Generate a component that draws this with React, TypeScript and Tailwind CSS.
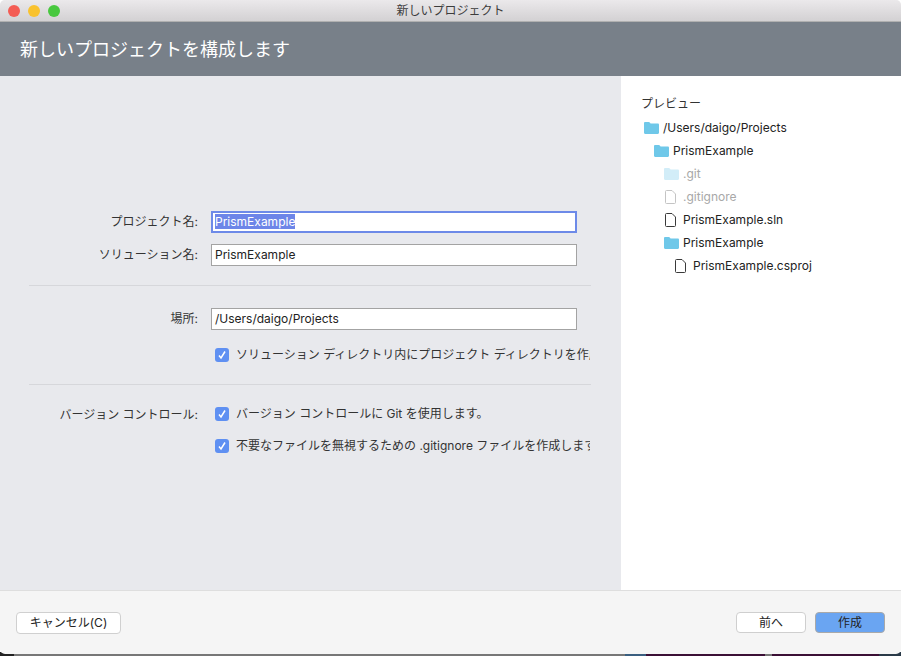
import type { ReactNode } from 'react';

const font = { fontFamily: '"Inter", "Noto Sans CJK JP", sans-serif' };

function FolderIcon({ faded }: { faded?: boolean }) {
  return (
    <svg width="15" height="12" viewBox="0 0 15 12" className="shrink-0">
      <path
        d="M0 1.200C0 .5.5 0 1.200 0h3.600c.5 0 .8.2 1 .5L6.600 1.600h7.200c.7 0 1.200.5 1.200 1.200v8c0 .7-.5 1.200-1.200 1.200H1.200C.5 12 0 11.500 0 10.800z"
        fill={faded ? '#d2edf8' : '#6fc8e9'}
      />
    </svg>
  );
}

function FileIcon({ faded }: { faded?: boolean }) {
  return (
    <svg width="11" height="14" viewBox="0 0 11 14" className="shrink-0">
      <path
        d="M1.500.5h5.500L10.500 4v8.500a1 1 0 0 1-1 1h-8a1 1 0 0 1-1-1v-11a1 1 0 0 1 1-1z"
        fill="#fff"
        stroke={faded ? '#c4c4c4' : '#3a3a3a'}
      />
    </svg>
  );
}

function Check() {
  return (
    <span className="flex h-[14px] w-[14px] shrink-0 items-center justify-center rounded-[3px] bg-[#5f90f2]">
      <svg width="10" height="10" viewBox="0 0 10 10">
        <path d="M2 5.500 4 8l4-6.500" fill="none" stroke="#fff" strokeWidth="1.500" />
      </svg>
    </span>
  );
}

function FormRow({ label, children }: { label?: string; children: ReactNode }) {
  return (
    <div className="flex items-center">
      <div className="w-[169px] shrink-0 pt-[1px] text-right text-[12px] text-[#333]">{label}</div>
      <div className="ml-[13px] min-w-0 flex-1">{children}</div>
    </div>
  );
}

function TextBox({ value, focused }: { value: string; focused?: boolean }) {
  return (
    <div
      className={`flex h-[22px] w-[366px] items-center bg-white text-[12px] text-[#222] ${
        focused ? 'border-2 border-[#6d8ae8] px-[2px]' : 'border border-[#a3a3a3] px-[3px] pt-[1px]'
      }`}
    >
      {focused ? <span className="bg-[#6d85e8] leading-[15px] text-white">{value}</span> : value}
    </div>
  );
}

function CheckRow({ label }: { label: string }) {
  return (
    <div className="flex w-[379px] items-center gap-[7px] overflow-hidden pl-[4px]">
      <Check />
      <span className="whitespace-nowrap text-[12px] text-[#333]">{label}</span>
    </div>
  );
}

function TreeRow({
  indent,
  name,
  file,
  faded,
}: {
  indent: string;
  name: string;
  file?: boolean;
  faded?: boolean;
}) {
  return (
    <div className={`flex h-[23px] items-center ${indent} ${file ? 'gap-[7px]' : 'gap-[4px]'}`}>
      {file ? <FileIcon faded={faded} /> : <FolderIcon faded={faded} />}
      <span className={`text-[12px] ${faded ? 'text-[#a8a8a8]' : 'text-[#222]'}`}>{name}</span>
    </div>
  );
}

export default function App() {
  return (
    <div className="relative h-[656px] w-[901px] overflow-hidden" style={font}>
      {/* desktop showing under the window */}
      <div className="absolute inset-x-0 bottom-0 flex h-[4px]">
        <div className="w-[14px] bg-[#222]" />
        <div className="w-[611px] bg-[#777]" />
        <div className="w-[21px] bg-[#3a5f80]" />
        <div className="w-[119px] bg-[#3b0f35]" />
        <div className="w-[7px] bg-[#777]" />
        <div className="w-[107px] bg-[#3b0f35]" />
        <div className="flex-1 bg-[#2a3a48]" />
      </div>
      <div className="relative flex h-[654px] flex-col overflow-hidden rounded-[5px] bg-[#f5f5f5]">
        <div className="relative flex h-[22px] shrink-0 items-center justify-center border-b border-[#b0b0b0] bg-gradient-to-b from-[#ebe9eb] to-[#d3d1d3]">
          <div className="absolute left-[8px] top-[5px] flex gap-[8px]">
            <span className="h-[12px] w-[12px] rounded-full bg-[#f45c54]" />
            <span className="h-[12px] w-[12px] rounded-full bg-[#f9c22e]" />
            <span className="h-[12px] w-[12px] rounded-full bg-[#48c83f]" />
          </div>
          <span className="text-[12px] text-[#3c3c3c]">新しいプロジェクト</span>
        </div>

        <div className="flex h-[54px] shrink-0 items-center bg-[#788089] pl-[20px] pt-[1px] text-[18px] text-white">
          新しいプロジェクトを構成します
        </div>

        <div className="flex min-h-0 flex-1">
          <div className="flex w-[621px] shrink-0 flex-col justify-center bg-[#e8e9ed] pb-[1px] pl-[29px] pr-[30px]">
            <div className="flex flex-col gap-[11px]">
              <FormRow label="プロジェクト名:">
                <TextBox value="PrismExample" focused />
              </FormRow>
              <FormRow label="ソリューション名:">
                <TextBox value="PrismExample" />
              </FormRow>
            </div>
            <div className="my-[19px] h-px bg-[#d6d7db]" />
            <div className="mt-[3px] flex flex-col gap-[16px]">
              <FormRow label="場所:">
                <TextBox value="/Users/daigo/Projects" />
              </FormRow>
              <FormRow>
                <CheckRow label="ソリューション ディレクトリ内にプロジェクト ディレクトリを作成します。" />
              </FormRow>
            </div>
            <div className="mb-[20px] mt-[20px] h-px bg-[#d6d7db]" />
            <div className="flex flex-col gap-[13px]">
              <FormRow label="バージョン コントロール:">
                <CheckRow label="バージョン コントロールに Git を使用します。" />
              </FormRow>
              <FormRow>
                <CheckRow label="不要なファイルを無視するための .gitignore ファイルを作成します。" />
              </FormRow>
            </div>
          </div>

          <div className="flex-1 bg-white pl-[20px] pt-[18px]">
            <div className="mb-[2px] h-[20px] text-[12px] leading-[20px] text-[#333]">プレビュー</div>
            <TreeRow indent="pl-[3px]" name="/Users/daigo/Projects" />
            <TreeRow indent="pl-[13px]" name="PrismExample" />
            <TreeRow indent="pl-[23px]" name=".git" faded />
            <TreeRow indent="pl-[24px]" name=".gitignore" file faded />
            <TreeRow indent="pl-[24px]" name="PrismExample.sln" file />
            <TreeRow indent="pl-[23px]" name="PrismExample" />
            <TreeRow indent="pl-[34px]" name="PrismExample.csproj" file />
          </div>
        </div>

        <div className="flex h-[64px] shrink-0 items-center justify-between border-t border-[#dedede] pl-[16px] pr-[16px]">
          <button className="h-[22px] w-[105px] rounded-[4px] border border-[#d0d0d0] bg-white text-[12px] text-[#222]">
            キャンセル(C)
          </button>
          <div className="flex gap-[9px]">
            <button className="h-[21px] w-[70px] rounded-[4px] border border-[#cfcfcf] bg-white text-[12px] text-[#222]">
              前へ
            </button>
            <button className="h-[21px] w-[70px] rounded-[4px] border border-[#a9a9a9] bg-[#6aa5f2] text-[12px] text-[#222]">
              作成
            </button>
          </div>
        </div>
      </div>
    </div>
  );
}
